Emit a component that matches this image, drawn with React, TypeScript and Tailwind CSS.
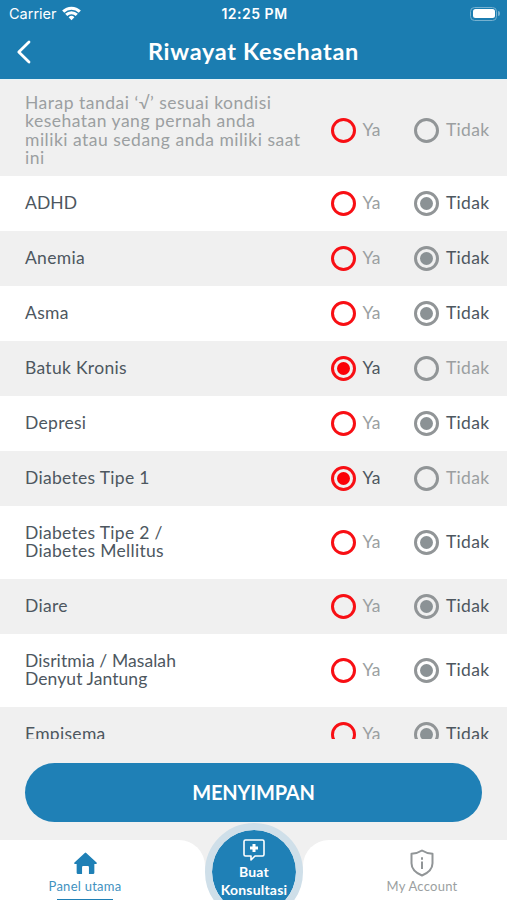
import clsx from "clsx";

type Answer = "ya" | "tidak" | null;

const questions: { lines: string[]; answer: Answer; tight?: boolean }[] = [
  { lines: ["ADHD"], answer: "tidak", tight: true },
  { lines: ["Anemia"], answer: "tidak" },
  { lines: ["Asma"], answer: "tidak" },
  { lines: ["Batuk Kronis"], answer: "ya" },
  { lines: ["Depresi"], answer: "tidak" },
  { lines: ["Diabetes Tipe 1"], answer: "ya" },
  { lines: ["Diabetes Tipe 2 /", "Diabetes Mellitus"], answer: "tidak" },
  { lines: ["Diare"], answer: "tidak" },
  { lines: ["Disritmia / Masalah", "Denyut Jantung"], answer: "tidak", tight: true },
  { lines: ["Empisema"], answer: "tidak" },
];

const intro = [
  "Harap tandai ‘√’ sesuai kondisi",
  "kesehatan yang pernah anda",
  "miliki atau sedang anda miliki saat",
  "ini",
];

const Radio = ({ label, red, checked }: { label: string; red?: boolean; checked: boolean }) => (
  <div className="flex items-center">
    <span
      className={clsx(
        "flex size-[25px] shrink-0 items-center justify-center rounded-full border-[3px]",
        red ? "border-[#f80f14]" : "border-[#919597]"
      )}
    >
      {checked && (
        <span className={clsx("size-[13px] rounded-full", red ? "bg-[#fb0007]" : "bg-[#8b9295]")} />
      )}
    </span>
    <span className={clsx("ml-[7px]", checked ? "text-[#4d575f]" : "text-[#9b9fa1]")}>{label}</span>
  </div>
);

type RowProps = { lines: string[]; answer: Answer; muted?: boolean; tight?: boolean };

const Row = ({ lines, answer, muted, tight }: RowProps) => (
  <div
    className={clsx(
      "flex items-center text-[17.5px] leading-[18.3px] odd:bg-[#f0f0f0] even:bg-white",
      muted ? "pt-[14px] pb-[9px]" : "py-[18.3px]"
    )}
  >
    <div
      className={clsx(
        "w-[330.5px] pl-[25px] whitespace-nowrap",
        muted ? "text-[#9b9fa1]" : "text-[#4d575f]",
        muted && "tracking-[0.5px]",
        !muted && (tight ? "tracking-[0.08px]" : "tracking-[0.3px]")
      )}
    >
      {lines.map((line) => (
        <p key={line}>{line}</p>
      ))}
    </div>
    <div className="-my-1 w-[83.5px] tracking-[0.3px]">
      <Radio label="Ya" red checked={answer === "ya"} />
    </div>
    <div className="-my-1 tracking-[0.3px]">
      <Radio label="Tidak" checked={answer === "tidak"} />
    </div>
  </div>
);

const Header = () => (
  <header className="h-[79px] shrink-0 bg-[#1b7db1] text-white">
    <div className="grid h-[27px] grid-cols-3 items-center pr-[7px] pl-[9px] font-[Inter] text-[14px]">
      <div className="flex items-center gap-[5px]">
        <span className="text-[14.5px]">Carrier</span>
        <svg width="19" height="15" viewBox="0 0 19 15" fill="none" stroke="white" strokeWidth="3">
          <path d="M1.2 5.6a11.8 11.8 0 0 1 16.6 0" />
          <path d="M4.2 8.9a7.5 7.5 0 0 1 10.6 0" />
          <path d="M9.5 14.3 6.6 11.3a4.1 4.1 0 0 1 5.8 0z" fill="white" stroke="none" />
        </svg>
      </div>
      <span className="text-center font-semibold tracking-[0.5px]">12:25 PM</span>
      <div className="flex items-center justify-end gap-px">
        <span className="h-[14px] w-[27px] rounded-[4.5px] border border-[#76b1d0] p-[1.5px]">
          <span className="block h-full rounded-[2.5px] bg-white" />
        </span>
        <span className="h-[5px] w-[2px] rounded-r-full bg-[#76b1d0]" />
      </div>
    </div>
    <div className="grid h-[49px] grid-cols-[60px_1fr_60px] items-center">
      <svg className="ml-[16px]" width="16" height="24" viewBox="0 0 16 24" fill="none" stroke="white" strokeWidth="2.8" strokeLinecap="round" strokeLinejoin="round">
        <path d="M13 2 2.8 12 13 22" />
      </svg>
      <h1 className="text-center text-[23.5px] font-bold tracking-[0.7px] whitespace-nowrap">Riwayat Kesehatan</h1>
    </div>
  </header>
);

const ConsultButton = () => (
  <button className="absolute top-[-17px] left-[205px] flex size-[98px] flex-col items-center rounded-full border-[7px] border-[#cfdfe9] bg-[#1f80b6] bg-clip-padding pt-[9px] text-[14px] leading-[18px] font-bold tracking-[0.2px] text-white">
    <svg className="shrink-0" width="22" height="22" viewBox="0 0 22 22" fill="none" stroke="white" strokeWidth="1.6" strokeLinejoin="round">
      <path d="M2.5 1h17A1.5 1.5 0 0 1 21 2.5v13a1.5 1.5 0 0 1-1.5 1.5H12l-4 4v-4H2.5A1.5 1.5 0 0 1 1 15.5v-13A1.5 1.5 0 0 1 2.5 1z" />
      <path d="M11 5v8M7 9h8" strokeWidth="3" />
    </svg>
    <span className="mt-[2px]">Buat</span>
    <span className="whitespace-nowrap">Konsultasi</span>
  </button>
);

const BottomNav = () => (
  <nav className="relative mt-auto flex h-[60px] shrink-0 text-[13px] tracking-[0.25px]">
    <div className="flex w-[205px] flex-col items-center overflow-hidden rounded-tr-[26px] bg-white pt-[12px] pr-[35px] text-[#3f92bf]">
      <svg className="shrink-0" width="25" height="23" viewBox="0 0 24 22" fill="#1f80b6">
        <path d="M11.3.9a1 1 0 0 1 1.4 0l9.9 9.2c.6.6.3 1.3-.5 1.3H20.5v8.4a1.3 1.3 0 0 1-1.3 1.3h-3.9V14.5a1 1 0 0 0-1-1H9.7a1 1 0 0 0-1 1v6.6H4.8a1.3 1.3 0 0 1-1.3-1.3v-8.4H1.9c-.8 0-1.1-.7-.5-1.3z" />
      </svg>
      <span className="mt-[2px] leading-[18px]">Panel utama</span>
      <span className="mt-[3.5px] h-[3px] w-[56px] shrink-0 bg-[#1f80b6]" />
    </div>
    <div className="h-[28px] flex-1 self-end bg-white" />
    <div className="flex w-[204px] flex-col items-center rounded-tl-[26px] bg-white pt-[9px] pl-[34px] text-[#9b9fa1]">
      <svg width="24" height="28" viewBox="0 0 24 28" fill="none" stroke="#919597" strokeWidth="2">
        <path d="M12 1.5c3 2 6.5 3 10.5 3.2v9.5c0 5.5-4 9.5-10.5 12.3C5.5 23.7 1.5 19.7 1.5 14.2V4.7C5.5 4.5 9 3.5 12 1.5z" strokeLinejoin="round" />
        <path d="M12 12.5v7.5M12 8.3v2.4" />
      </svg>
      <span className="leading-[18px]">My Account</span>
    </div>
    <ConsultButton />
  </nav>
);

export default function App() {
  return (
    <div className="flex h-[900px] w-[507px] flex-col overflow-hidden bg-[#f0f0f0] font-[Lato,sans-serif]">
      <Header />
      <main className="h-[660px] shrink-0 overflow-hidden border-t border-[#e6f4f7]">
        <Row lines={intro} answer={null} muted />
        {questions.map((question) => (
          <Row key={question.lines[0]} {...question} />
        ))}
      </main>
      <button className="mx-[25px] mt-[24px] h-[59px] shrink-0 rounded-full bg-[#1f80b6] pb-[2px] text-[20px] font-bold tracking-[-0.2px] text-white">
        MENYIMPAN
      </button>
      <BottomNav />
    </div>
  );
}
